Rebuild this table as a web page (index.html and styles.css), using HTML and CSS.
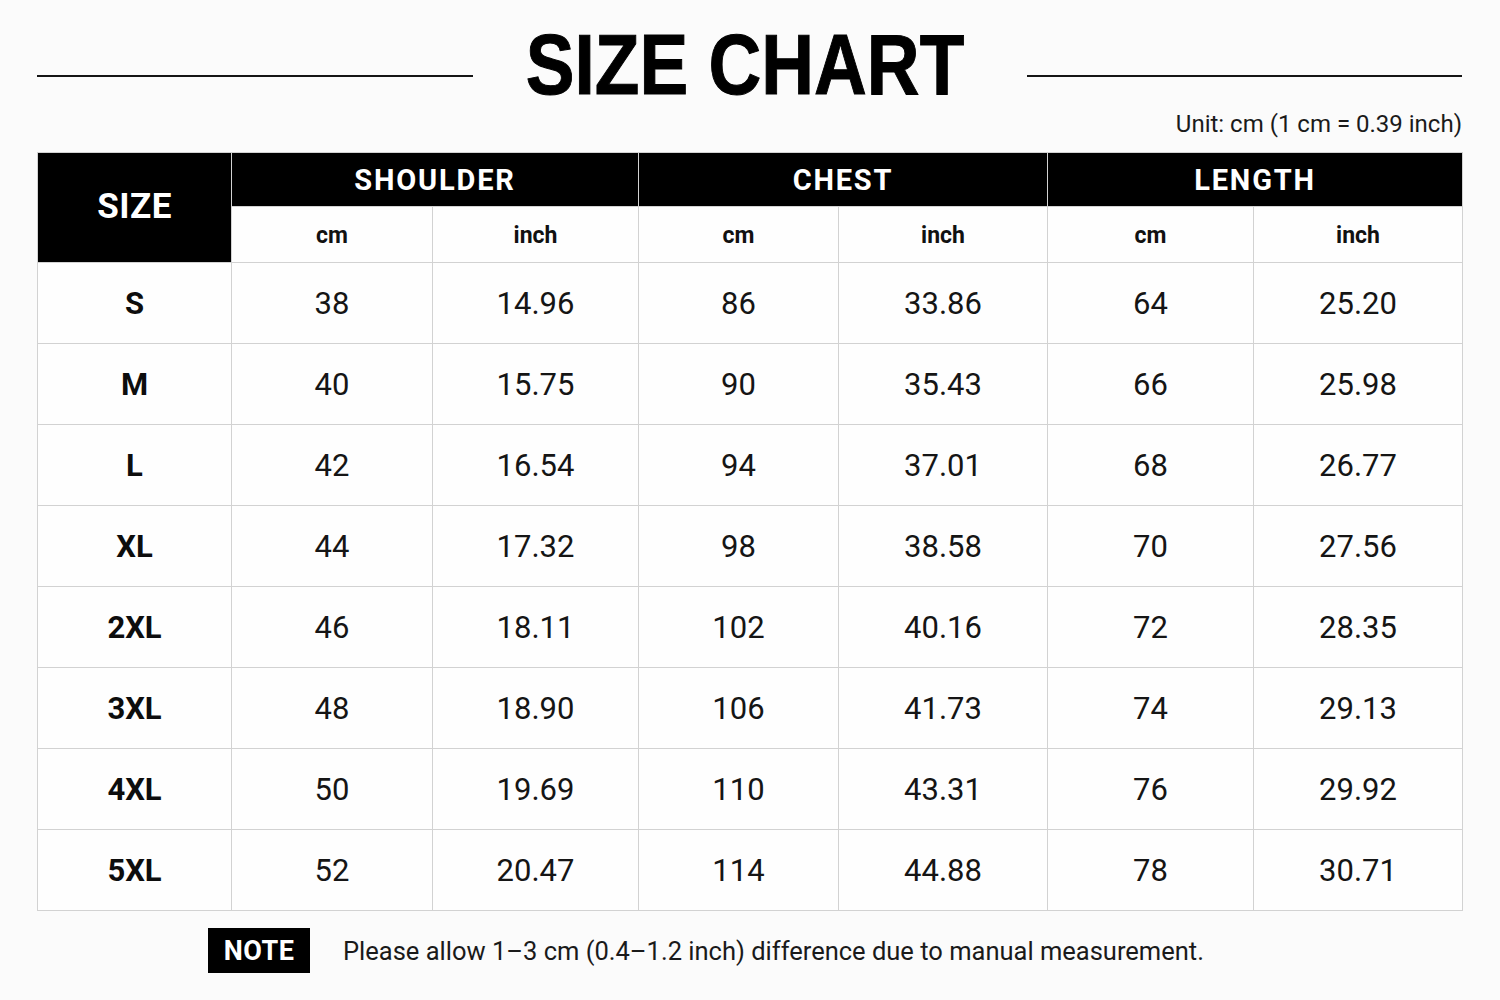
FILE: index.html
```html
<!DOCTYPE html>
<html lang="en">
<head>
<meta charset="utf-8">
<title>Size Chart</title>
<link rel="stylesheet" href="styles.css">
</head>
<body>
<div class="page">
  <header class="title-row">
    <span class="rule"></span>
    <h1 class="title"><span class="title-text">SIZE CHART</span></h1>
    <span class="rule"></span>
  </header>
  <p class="unit">Unit: cm (1 cm = 0.39 inch)</p>
  <table class="chart">
    <colgroup>
      <col class="c-size"><col class="c1"><col class="c2"><col class="c3"><col class="c4"><col class="c5"><col class="c6">
    </colgroup>
    <thead>
      <tr class="head-top">
        <th rowspan="2" class="size-head">SIZE</th>
        <th colspan="2" class="group">SHOULDER</th>
        <th colspan="2" class="group">CHEST</th>
        <th colspan="2" class="group">LENGTH</th>
      </tr>
      <tr class="head-sub">
        <th>cm</th><th>inch</th><th>cm</th><th>inch</th><th>cm</th><th>inch</th>
      </tr>
    </thead>
    <tbody>
      <tr><th>S</th><td>38</td><td>14.96</td><td>86</td><td>33.86</td><td>64</td><td>25.20</td></tr>
      <tr><th>M</th><td>40</td><td>15.75</td><td>90</td><td>35.43</td><td>66</td><td>25.98</td></tr>
      <tr><th>L</th><td>42</td><td>16.54</td><td>94</td><td>37.01</td><td>68</td><td>26.77</td></tr>
      <tr><th>XL</th><td>44</td><td>17.32</td><td>98</td><td>38.58</td><td>70</td><td>27.56</td></tr>
      <tr><th>2XL</th><td>46</td><td>18.11</td><td>102</td><td>40.16</td><td>72</td><td>28.35</td></tr>
      <tr><th>3XL</th><td>48</td><td>18.90</td><td>106</td><td>41.73</td><td>74</td><td>29.13</td></tr>
      <tr><th>4XL</th><td>50</td><td>19.69</td><td>110</td><td>43.31</td><td>76</td><td>29.92</td></tr>
      <tr><th>5XL</th><td>52</td><td>20.47</td><td>114</td><td>44.88</td><td>78</td><td>30.71</td></tr>
    </tbody>
  </table>
  <div class="note">
    <span class="note-tag">NOTE</span>
    <span class="note-text">Please allow 1–3 cm (0.4–1.2 inch) difference due to manual measurement.</span>
  </div>
</div>
</body>
</html>
```
FILE: styles.css
```css
html, body {
  margin: 0;
  padding: 0;
  background: #fbfbfb;
}
body {
  font-family: Roboto, "Liberation Sans", sans-serif;
  color: #111;
}
.page {
  width: 1425px;
  padding: 21px 0 0 37px;
}
.title-row {
  display: flex;
  align-items: flex-start;
}
.rule {
  flex: 1;
  height: 2px;
  margin-top: 54px;
  background: #151515;
}
.title {
  flex: none;
  display: flex;
  justify-content: center;
  width: 435px;
  margin: 0 64px 0 55px;
  font-family: "Liberation Sans", Arial, sans-serif;
  font-weight: 700;
  font-size: 86px;
  line-height: 86px;
  color: #000;
  white-space: nowrap;
}
.title-text {
  flex: none;
  display: inline-block;
  transform: scaleX(0.85);
  -webkit-text-stroke: 1px #000;
}
.unit {
  margin: 4px 0 0;
  text-align: right;
  font-size: 24px;
  line-height: 26px;
  color: #1a1a1a;
}
.chart {
  margin-top: 15px;
  width: 1425px;
  border-collapse: collapse;
  table-layout: fixed;
  background: #fefefe;
}
.c-size { width: 194px; }
.c1 { width: 201px; }
.c2 { width: 206px; }
.c3 { width: 200px; }
.c4 { width: 209px; }
.c5 { width: 206px; }
.c6 { width: 209px; }
.chart th, .chart td {
  border: 1px solid #d2d2d2;
  text-align: center;
  vertical-align: middle;
  padding: 0;
}
.head-top { height: 54px; }
.head-top th {
  background: #000;
  color: #fff;
  font-weight: 700;
  font-size: 29px;
  letter-spacing: 1.8px;
}
.chart .size-head {
  font-size: 35px;
  letter-spacing: 0.5px;
  padding-bottom: 2px;
}
.head-sub { height: 56px; }
.head-sub th {
  font-weight: 700;
  font-size: 23px;
  color: #111;
  padding-top: 2px;
}
.chart tbody tr { height: 81px; }
.chart tbody th {
  font-weight: 700;
  font-size: 31px;
  color: #0d0d0d;
}
.chart tbody td {
  font-weight: 400;
  font-size: 31px;
  color: #151515;
}
.note {
  display: flex;
  align-items: center;
  gap: 33px;
  margin: 17px 0 0 171px;
}
.note-tag {
  display: flex;
  align-items: center;
  justify-content: center;
  width: 102px;
  height: 45px;
  background: #000;
  color: #fff;
  font-weight: 700;
  font-size: 27px;
  letter-spacing: 0.5px;
}
.note-text {
  font-size: 25.5px;
  color: #1a1a1a;
}
```
